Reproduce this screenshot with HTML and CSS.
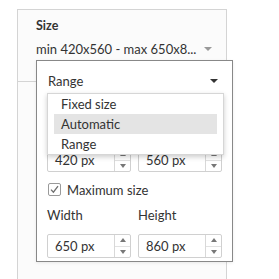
FILE: index.html
```html
<!DOCTYPE html>
<html lang="en">
<head>
    <meta charset="UTF-8">
    <title>Size</title>
    <link rel="stylesheet" href="styles.css">
</head>
<body>

<div class="size-panel">
    <div class="size-title">Size</div>
    <button class="size-value">
        <span>min 420x560 - max 650x8...</span>
        <span class="caret caret-light"></span>
    </button>
    <div class="size-divider"></div>

    <!-- Popup with the range editor -->
    <div class="size-popup">
        <div class="popup-select">
            <span>Range</span>
            <span class="caret"></span>
        </div>

        <div class="field-row row-min">
            <div class="num-input">
                <span class="num-text">420 px</span>
                <span class="spinner"><span class="spin-up"></span><span class="spin-down"></span></span>
            </div>
            <div class="num-input">
                <span class="num-text">560 px</span>
                <span class="spinner"><span class="spin-up"></span><span class="spin-down"></span></span>
            </div>
        </div>

        <label class="check-row">
            <span class="checkbox">
                <svg width="11" height="11" viewBox="0 0 11 11"><path d="M2 5.6 L4.4 8.2 L9 2.2" fill="none" stroke="#6f6f6f" stroke-width="1.3"/></svg>
            </span>
            Maximum size
        </label>

        <div class="field-row labels">
            <span>Width</span>
            <span>Height</span>
        </div>
        <div class="field-row">
            <div class="num-input">
                <span class="num-text">650 px</span>
                <span class="spinner"><span class="spin-up"></span><span class="spin-down"></span></span>
            </div>
            <div class="num-input">
                <span class="num-text">860 px</span>
                <span class="spinner"><span class="spin-up"></span><span class="spin-down"></span></span>
            </div>
        </div>

        <!-- open dropdown list -->
        <ul class="option-list">
            <li>Fixed size</li>
            <li class="active">Automatic</li>
            <li>Range</li>
        </ul>
    </div>
</div>

</body>
</html>
```

FILE: styles.css
```css
body {
    margin: 0;
    background-color: #fff;
    font-family: "Lato", "Open Sans", Arial, sans-serif;
    color: #333;
    font-size: 13px;
}
.size-panel {
    position: relative;
    margin: 9px 0 0 17px;
    width: 210px;
    height: 270px;
    border: 1px solid #d4d4d4;
    border-bottom: none;
    background-color: #fbfbfb;
    padding: 8px 0 0 18px;
    box-sizing: border-box;
}
.size-title {
    font-weight: bold;
    font-size: 12.5px;
    line-height: 16px;
    color: #333;
}
.size-value {
    display: flex;
    align-items: center;
    gap: 8px;
    margin-top: 7px;
    padding: 0;
    border: none;
    background: transparent;
    font: inherit;
    color: #333;
    line-height: 16px;
}
.size-divider {
    position: absolute;
    left: 0;
    top: 71px;
    width: 30px;
    border-top: 1px solid #d4d4d4;
}
.caret {
    width: 0;
    height: 0;
    border-left: 4px solid transparent;
    border-right: 4px solid transparent;
    border-top: 4px solid #333;
}
.caret-light {
    border-top-color: #999;
}
.size-popup {
    position: absolute;
    left: 18px;
    top: 50px;
    width: 197px;
    height: 202px;
    box-sizing: border-box;
    border: 1px solid #888;
    background-color: #fff;
    padding: 0 10px;
    box-shadow: 0 1px 3px rgba(0,0,0,0.08);
}
.popup-select {
    display: flex;
    justify-content: space-between;
    align-items: center;
    height: 40px;
    padding: 0 4px 0 1px;
}
.field-row {
    display: flex;
    gap: 7px;
}
.row-min {
    margin-top: 47px;
}
.num-input {
    display: flex;
    width: 84px;
    height: 24px;
    box-sizing: border-box;
    border: 1px solid #d0d0d0;
    border-radius: 2px;
    background: #fff;
}
.num-text {
    flex: 1;
    line-height: 22px;
    padding-left: 7px;
}
.spinner {
    display: flex;
    flex-direction: column;
    width: 15px;
    border-left: 1px solid #d8d8d8;
}
.spin-up,
.spin-down {
    flex: 1;
    display: flex;
    align-items: center;
    justify-content: center;
}
.spin-up {
    border-bottom: 1px solid #e2e2e2;
}
.spin-up::before {
    content: '';
    border-left: 3.5px solid transparent;
    border-right: 3.5px solid transparent;
    border-bottom: 4px solid #777;
}
.spin-down::before {
    content: '';
    border-left: 3.5px solid transparent;
    border-right: 3.5px solid transparent;
    border-top: 4px solid #777;
}
.check-row {
    display: flex;
    align-items: center;
    gap: 6px;
    margin-top: 11px;
    height: 13px;
    padding-left: 1px;
}
.checkbox {
    display: flex;
    align-items: center;
    justify-content: center;
    width: 13px;
    height: 13px;
    box-sizing: border-box;
    border: 1px solid #9a9a9a;
    border-radius: 2px;
    background: #fff;
}
.labels {
    margin-top: 11px;
    height: 16px;
    line-height: 16px;
    margin-bottom: 11px;
}
.labels span {
    width: 84px;
}
.option-list {
    position: absolute;
    left: 10px;
    top: 32px;
    width: 175px;
    margin: 0;
    padding: 0;
    list-style: none;
    background: #fff;
    border: 1px solid #d6d6d6;
    box-shadow: 0 2px 5px rgba(0,0,0,0.2);
}
.option-list li {
    height: 20px;
    line-height: 20px;
    margin: 0 6px 0 6px;
    padding-left: 7px;
}
.option-list li.active {
    background-color: #e4e4e4;
}
```
